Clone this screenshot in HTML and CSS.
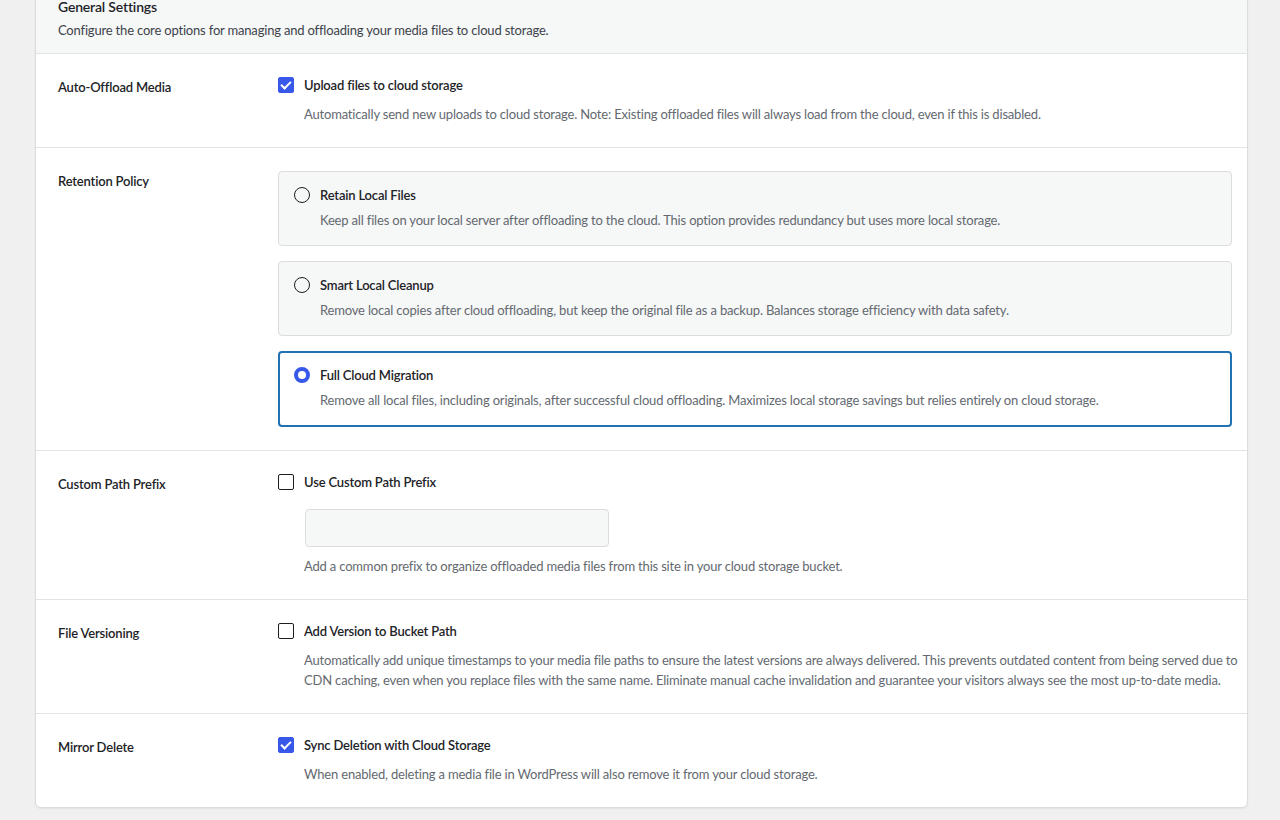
FILE: index.html
```html
<!DOCTYPE html>
<html lang="en">
<head>
    <meta charset="UTF-8">
    <meta name="viewport" content="width=device-width, initial-scale=1.0">
    <title>General Settings</title>
    <link rel="stylesheet" href="styles.css">
</head>
<body>
    <div class="card">
        <div class="card-header">
            <h2>General Settings</h2>
            <p>Configure the core options for managing and offloading your media files to cloud storage.</p>
        </div>

        <div class="row">
            <div class="label">Auto-Offload Media</div>
            <div class="field">
                <label class="check"><span class="box checked"></span>Upload files to cloud storage</label>
                <p class="desc">Automatically send new uploads to cloud storage. Note: Existing offloaded files will always load from the cloud, even if this is disabled.</p>
            </div>
        </div>

        <div class="row">
            <div class="label">Retention Policy</div>
            <div class="field options">
                <div class="option">
                    <div class="option-title"><span class="radio"></span>Retain Local Files</div>
                    <p class="option-desc">Keep all files on your local server after offloading to the cloud. This option provides redundancy but uses more local storage.</p>
                </div>
                <div class="option">
                    <div class="option-title"><span class="radio"></span>Smart Local Cleanup</div>
                    <p class="option-desc">Remove local copies after cloud offloading, but keep the original file as a backup. Balances storage efficiency with data safety.</p>
                </div>
                <div class="option selected">
                    <div class="option-title"><span class="radio on"></span>Full Cloud Migration</div>
                    <p class="option-desc">Remove all local files, including originals, after successful cloud offloading. Maximizes local storage savings but relies entirely on cloud storage.</p>
                </div>
            </div>
        </div>

        <div class="row">
            <div class="label">Custom Path Prefix</div>
            <div class="field">
                <label class="check"><span class="box"></span>Use Custom Path Prefix</label>
                <input class="text-input" type="text">
                <p class="desc">Add a common prefix to organize offloaded media files from this site in your cloud storage bucket.</p>
            </div>
        </div>

        <div class="row">
            <div class="label">File Versioning</div>
            <div class="field">
                <label class="check"><span class="box"></span>Add Version to Bucket Path</label>
                <p class="desc">Automatically add unique timestamps to your media file paths to ensure the latest versions are always delivered. This prevents outdated content from being served due to CDN caching, even when you replace files with the same name. Eliminate manual cache invalidation and guarantee your visitors always see the most up-to-date media.</p>
            </div>
        </div>

        <div class="row">
            <div class="label">Mirror Delete</div>
            <div class="field">
                <label class="check"><span class="box checked"></span>Sync Deletion with Cloud Storage</label>
                <p class="desc">When enabled, deleting a media file in WordPress will also remove it from your cloud storage.</p>
            </div>
        </div>
    </div>
</body>
</html>
```

FILE: styles.css
```css
/* Global Styles */
body {
    font-family: Lato, "Noto Sans", sans-serif;
    font-size: 13px;
    line-height: 20px;
    letter-spacing: -0.18px;
    background-color: #f0f0f1;
    margin: 0;
    padding: 0 32px 14px 35px;
    color: #1d2327;
}

.card {
    margin-top: -16px;
    background-color: #ffffff;
    border: 1px solid #dcdcde;
    border-radius: 6px;
    box-shadow: 0 1px 2px rgba(0,0,0,0.06);
}

.card-header {
    background-color: #f6f7f7;
    padding: 12px 22px 13px;
    border-bottom: 1px solid #e2e4e7;
    border-radius: 6px 6px 0 0;
}

.card-header h2 {
    margin: 0;
    font-size: 14px;
    font-weight: 600;
    line-height: 20px;
}

.card-header p {
    margin: 3px 0 0;
    color: #3c434a;
}

/* Rows */
.row {
    display: grid;
    grid-template-columns: 220px 1fr;
    padding: 21px 15px 23px 22px;
    border-bottom: 1px solid #e2e4e7;
}

.row:last-child {
    border-bottom: none;
}

.label {
    font-weight: 600;
    padding-top: 2px;
}

.check {
    display: flex;
    align-items: center;
    gap: 10px;
    font-weight: 600;
}

.box {
    width: 14px;
    height: 14px;
    border: 1px solid #1e1e1e;
    border-radius: 2px;
    flex-shrink: 0;
    position: relative;
}

.box.checked {
    background-color: #3858e9;
    border-color: #3858e9;
}

.box.checked::after {
    content: "";
    position: absolute;
    left: 4px;
    top: 1px;
    width: 4px;
    height: 8px;
    border: solid #fff;
    border-width: 0 2px 2px 0;
    transform: rotate(45deg);
}

.desc {
    margin: 9px -10px 0 26px;
    color: #646970;
}

.text-input {
    display: block;
    margin: 17px 0 0 27px;
    width: 304px;
    height: 38px;
    box-sizing: border-box;
    border: 1px solid #dcdcde;
    border-radius: 4px;
    background-color: #f6f7f7;
    font-family: inherit;
}

/* Retention options */
.options {
    display: flex;
    flex-direction: column;
    gap: 15px;
    padding-top: 2px;
}

.option {
    background-color: #f6f7f7;
    border: 1px solid #dcdcde;
    border-radius: 4px;
    padding: 13px 15px 15px;
}

.option.selected {
    background-color: #ffffff;
    border: 2px solid #2271b1;
    padding: 12px 14px 15px;
}

.option-title {
    display: flex;
    align-items: center;
    gap: 10px;
    font-weight: 600;
}

.radio {
    width: 14px;
    height: 14px;
    border: 1px solid #1e1e1e;
    border-radius: 50%;
    flex-shrink: 0;
}

.radio.on {
    width: 8px;
    height: 8px;
    border: 4px solid #3858e9;
}

.option-desc {
    margin: 5px 0 0 26px;
    color: #646970;
}
```
